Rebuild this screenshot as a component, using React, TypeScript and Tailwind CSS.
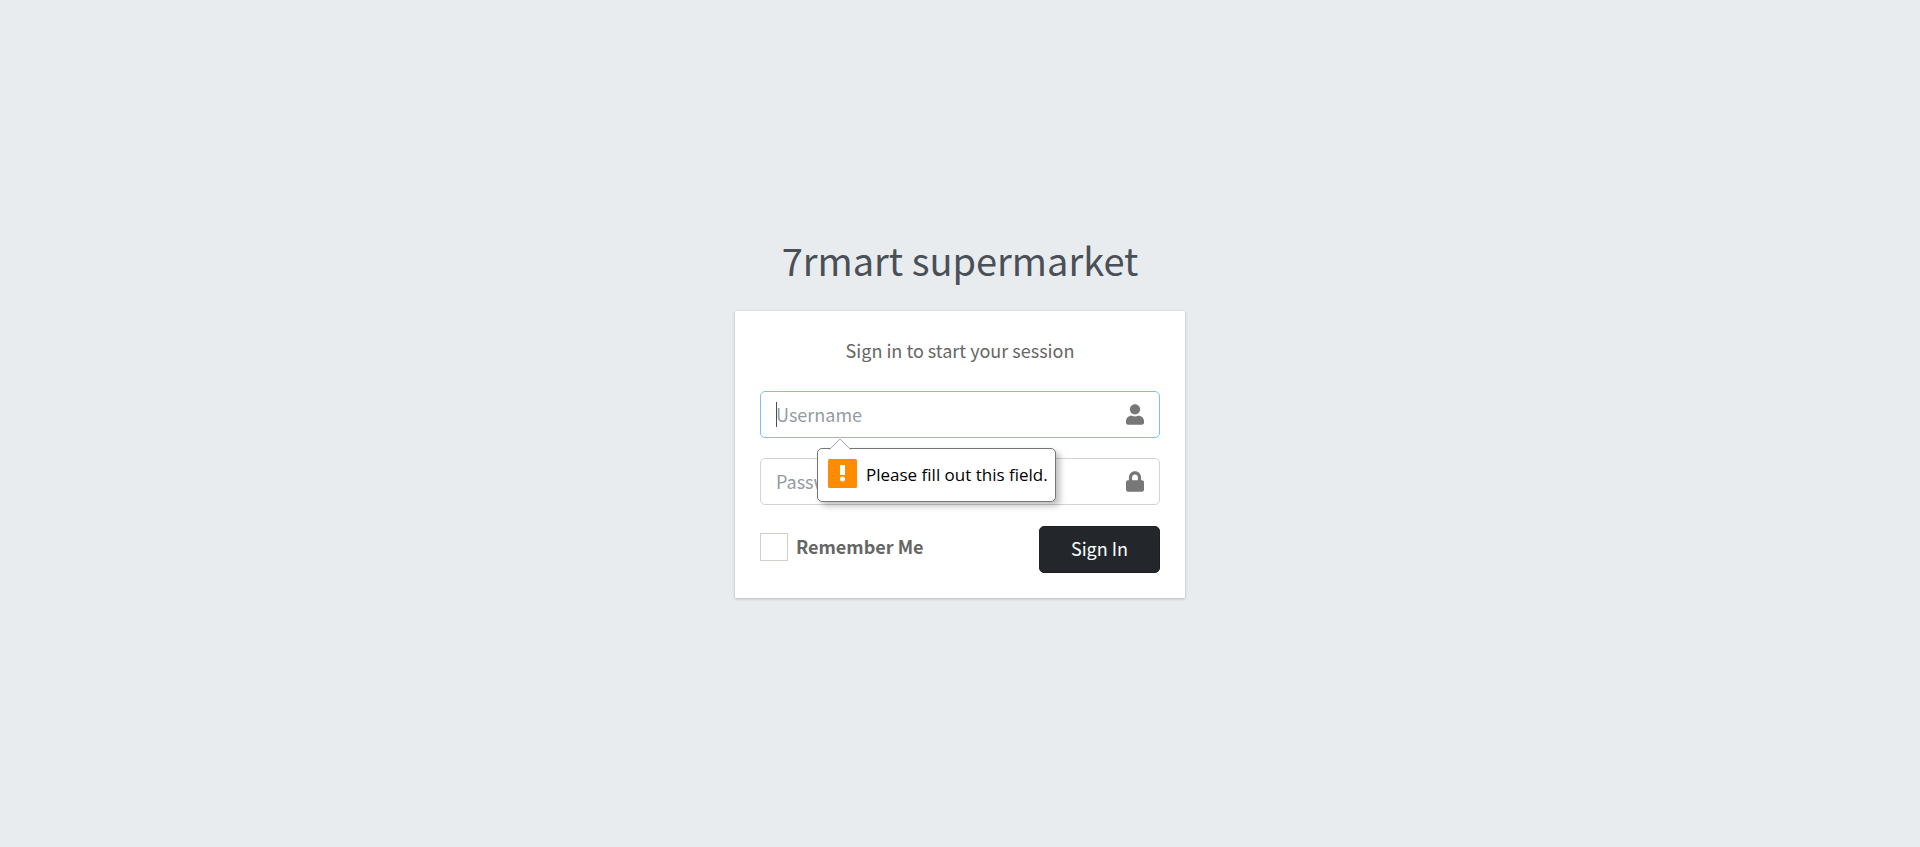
import type { ReactNode } from "react";

type FieldProps = {
  id: string;
  type: string;
  placeholder: string;
  active?: boolean;
  icon: ReactNode;
  children?: ReactNode;
};

function Field({ id, type, placeholder, active, icon, children }: FieldProps) {
  return (
    <div
      className={`relative flex h-[47px] items-center rounded-[5px] border ${
        active ? "border-[#80bdff]" : "border-[#ced4da]"
      }`}
    >
      <input
        id={id}
        name={id}
        type={type}
        placeholder={placeholder}
        aria-label={placeholder}
        className="h-full min-w-0 flex-1 bg-transparent pb-px pl-[15px] text-lg text-[#495057] outline-none placeholder:text-[#939ba2]"
      />
      <label htmlFor={id} className="flex w-12 justify-center text-[#777777]">
        {icon}
      </label>
      {children}
    </div>
  );
}

function UserIcon() {
  return (
    <svg viewBox="0 0 448 512" className="h-[21px] w-[18px]" fill="currentColor" aria-hidden="true">
      <path d="M224 256c70.7 0 128-57.3 128-128S294.7 0 224 0 96 57.3 96 128s57.3 128 128 128zm89.6 32h-16.700c-22.200 10.200-46.900 16-72.900 16s-50.600-5.800-72.900-16h-16.700C60.200 288 0 348.200 0 422.400V464c0 26.500 21.500 48 48 48h352c26.500 0 48-21.500 48-48v-41.600c0-74.200-60.200-134.400-134.400-134.400z" />
    </svg>
  );
}

function LockIcon() {
  return (
    <svg viewBox="0 0 448 512" className="h-[21px] w-[18px]" fill="currentColor" aria-hidden="true">
      <path d="M400 224h-24v-72C376 68.200 307.800 0 224 0S72 68.200 72 152v72H48c-26.500 0-48 21.500-48 48v192c0 26.500 21.500 48 48 48h352c26.500 0 48-21.500 48-48V272c0-26.500-21.500-48-48-48zm-104 0H152v-72c0-39.700 32.300-72 72-72s72 32.300 72 72v72z" />
    </svg>
  );
}

function ValidationBubble() {
  return (
    <div
      role="alert"
      className="absolute left-14 top-14 z-10 flex h-[54px] w-[239px] items-center gap-[9px] rounded-[5px] border border-[#767676] bg-white pl-[10px] font-['Open_Sans',sans-serif] text-[17px] text-black shadow-[4px_4px_6px_rgba(0,0,0,0.25)]"
    >
      <svg viewBox="0 0 22 12" className="absolute -top-[11px] left-[11px] h-3 w-[22px]" aria-hidden="true">
        <path d="M0 12 11 1 22 12Z" fill="#fff" />
        <path d="M0.500 11.500 11 1 21.500 11.500" fill="none" stroke="#a9a9a9" />
      </svg>
      <svg viewBox="0 0 29 29" className="mb-1 size-[29px] shrink-0" aria-hidden="true">
        <rect width="29" height="29" rx="1.500" fill="#ff8c00" />
        <path d="M12 6h5v10h-5z" fill="#fff" />
        <circle cx="14.500" cy="20" r="2.500" fill="#fff" />
      </svg>
      <span className="whitespace-nowrap">Please fill out this field.</span>
    </div>
  );
}

export default function App() {
  return (
    <main className="flex min-h-screen flex-col items-center justify-center bg-[#e9ecef] font-['Noto_Sans_CJK_SC',sans-serif] text-lg text-[#666666]">
      <div className="mb-6 w-full max-w-[450px]">
        <h1 className="mb-4 text-center text-[38px] leading-[70px] font-normal text-[#495057]">
          <a href="#">7rmart supermarket</a>
        </h1>
        <form
          noValidate
          onSubmit={(event) => event.preventDefault()}
          className="bg-white p-[25px] shadow-[0_0_1px_rgba(0,0,0,0.125),0_1px_3px_rgba(0,0,0,0.2)]"
        >
          <p className="mb-[27px] text-center leading-7">Sign in to start your session</p>
          <div className="flex flex-col gap-5">
            <Field id="username" type="text" placeholder="Username" active icon={<UserIcon />}>
              <span className="absolute left-[15px] h-[25px] w-px bg-[#495057]" />
              <ValidationBubble />
            </Field>
            <Field id="password" type="password" placeholder="Password" icon={<LockIcon />} />
            <div className="flex h-12 items-end justify-between">
              <label className="flex h-10 items-start gap-2 leading-[26px] font-bold">
                <input
                  type="checkbox"
                  name="remember"
                  className="size-7 appearance-none border border-[#d3cfc8] bg-white checked:bg-[#343a40]"
                />
                Remember Me
              </label>
              <button
                type="submit"
                className="h-[47px] w-[121px] rounded-[5px] border border-[#1d2124] bg-[#23272b] pb-[3px] text-white"
              >
                Sign In
              </button>
            </div>
          </div>
        </form>
      </div>
    </main>
  );
}
